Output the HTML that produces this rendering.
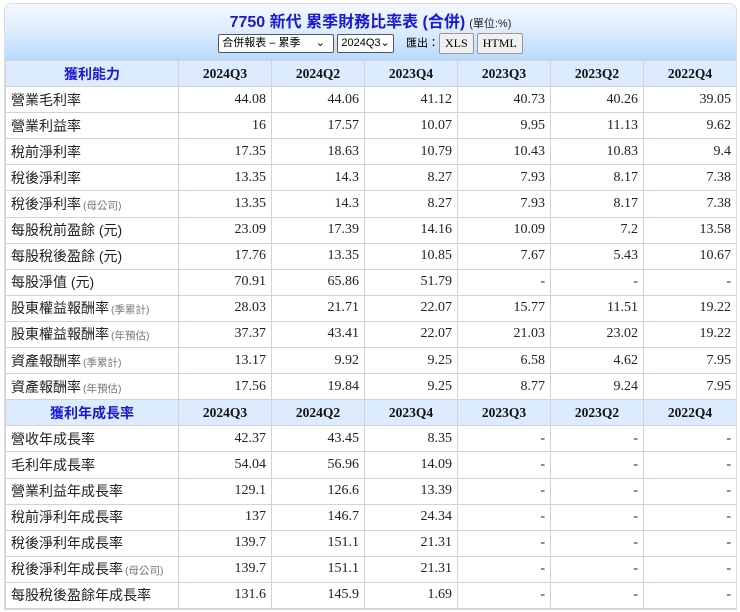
<html><head><style>
body{margin:0;background:#fff;font-family:"Liberation Sans","Noto Sans CJK TC",sans-serif;}
.wrap{position:absolute;left:4px;top:3px;width:731px;border:1px solid #d8dde3;border-radius:8px 8px 0 0;overflow:hidden;}
.top{height:56px;background:linear-gradient(#f3f8ff,#e3effd 40%,#b8d9fb);text-align:center;}
.t{padding-top:4px;font-size:16px;font-weight:bold;color:#1a1ad0;height:21px}
.t small{font-size:11px;color:#222;font-weight:normal;margin-left:4px}
.ctl{font-size:11px;color:#000;margin-top:4px}
.sel{display:inline-block;border:1px solid #555;background:#fff;height:17px;line-height:17px;padding:0 3px;font-size:11px;vertical-align:middle;border-radius:2px}
.btn{display:inline-block;border:1px solid #999;background:#f0f0f0;height:19px;line-height:19px;padding:0 5px;font-family:"Liberation Serif",serif;font-size:12px;vertical-align:middle;border-radius:2px}
table{border-collapse:collapse;width:731px;table-layout:fixed}
td{border:1px solid #d0d4d8;height:26.1px;padding:0 5px;font-size:14px;color:#222}
td.n{text-align:right;font-family:"Liberation Serif",serif;font-size:14px}
tr.h td{background:#dcebfd;font-family:"Liberation Serif",serif;font-weight:bold;text-align:center;font-size:13.5px;color:#111}
tr.h td.c{color:#1a1ad0;font-family:"Liberation Sans","Noto Sans CJK TC",sans-serif;font-size:14px}
i{font-style:normal;font-size:10.5px;color:#777;margin-left:2px}
</style></head><body><div class="wrap">
<div class="top"><div class="t">7750 新代 累季財務比率表 (合併)<small>(單位:%)</small></div>
<div class="ctl"><span class="sel" style="width:108px;text-align:left">合併報表 – 累季 &nbsp; &nbsp; ⌄</span> <span class="sel">2024Q3⌄</span> &nbsp; &nbsp;匯出：<span class="btn">XLS</span> <span class="btn">HTML</span></div></div>
<table><colgroup><col style="width:173px"><col span="6" style="width:93px"></colgroup>
<tr class="h"><td class="c">獲利能力</td><td>2024Q3</td><td>2024Q2</td><td>2023Q4</td><td>2023Q3</td><td>2023Q2</td><td>2022Q4</td></tr>
<tr><td>營業毛利率</td><td class="n">44.08</td><td class="n">44.06</td><td class="n">41.12</td><td class="n">40.73</td><td class="n">40.26</td><td class="n">39.05</td></tr>
<tr><td>營業利益率</td><td class="n">16</td><td class="n">17.57</td><td class="n">10.07</td><td class="n">9.95</td><td class="n">11.13</td><td class="n">9.62</td></tr>
<tr><td>稅前淨利率</td><td class="n">17.35</td><td class="n">18.63</td><td class="n">10.79</td><td class="n">10.43</td><td class="n">10.83</td><td class="n">9.4</td></tr>
<tr><td>稅後淨利率</td><td class="n">13.35</td><td class="n">14.3</td><td class="n">8.27</td><td class="n">7.93</td><td class="n">8.17</td><td class="n">7.38</td></tr>
<tr><td>稅後淨利率<i>(母公司)</i></td><td class="n">13.35</td><td class="n">14.3</td><td class="n">8.27</td><td class="n">7.93</td><td class="n">8.17</td><td class="n">7.38</td></tr>
<tr><td>每股稅前盈餘 (元)</td><td class="n">23.09</td><td class="n">17.39</td><td class="n">14.16</td><td class="n">10.09</td><td class="n">7.2</td><td class="n">13.58</td></tr>
<tr><td>每股稅後盈餘 (元)</td><td class="n">17.76</td><td class="n">13.35</td><td class="n">10.85</td><td class="n">7.67</td><td class="n">5.43</td><td class="n">10.67</td></tr>
<tr><td>每股淨值 (元)</td><td class="n">70.91</td><td class="n">65.86</td><td class="n">51.79</td><td class="n">-</td><td class="n">-</td><td class="n">-</td></tr>
<tr><td>股東權益報酬率<i>(季累計)</i></td><td class="n">28.03</td><td class="n">21.71</td><td class="n">22.07</td><td class="n">15.77</td><td class="n">11.51</td><td class="n">19.22</td></tr>
<tr><td>股東權益報酬率<i>(年預估)</i></td><td class="n">37.37</td><td class="n">43.41</td><td class="n">22.07</td><td class="n">21.03</td><td class="n">23.02</td><td class="n">19.22</td></tr>
<tr><td>資產報酬率<i>(季累計)</i></td><td class="n">13.17</td><td class="n">9.92</td><td class="n">9.25</td><td class="n">6.58</td><td class="n">4.62</td><td class="n">7.95</td></tr>
<tr><td>資產報酬率<i>(年預估)</i></td><td class="n">17.56</td><td class="n">19.84</td><td class="n">9.25</td><td class="n">8.77</td><td class="n">9.24</td><td class="n">7.95</td></tr>
<tr class="h"><td class="c">獲利年成長率</td><td>2024Q3</td><td>2024Q2</td><td>2023Q4</td><td>2023Q3</td><td>2023Q2</td><td>2022Q4</td></tr>
<tr><td>營收年成長率</td><td class="n">42.37</td><td class="n">43.45</td><td class="n">8.35</td><td class="n">-</td><td class="n">-</td><td class="n">-</td></tr>
<tr><td>毛利年成長率</td><td class="n">54.04</td><td class="n">56.96</td><td class="n">14.09</td><td class="n">-</td><td class="n">-</td><td class="n">-</td></tr>
<tr><td>營業利益年成長率</td><td class="n">129.1</td><td class="n">126.6</td><td class="n">13.39</td><td class="n">-</td><td class="n">-</td><td class="n">-</td></tr>
<tr><td>稅前淨利年成長率</td><td class="n">137</td><td class="n">146.7</td><td class="n">24.34</td><td class="n">-</td><td class="n">-</td><td class="n">-</td></tr>
<tr><td>稅後淨利年成長率</td><td class="n">139.7</td><td class="n">151.1</td><td class="n">21.31</td><td class="n">-</td><td class="n">-</td><td class="n">-</td></tr>
<tr><td>稅後淨利年成長率<i>(母公司)</i></td><td class="n">139.7</td><td class="n">151.1</td><td class="n">21.31</td><td class="n">-</td><td class="n">-</td><td class="n">-</td></tr>
<tr><td>每股稅後盈餘年成長率</td><td class="n">131.6</td><td class="n">145.9</td><td class="n">1.69</td><td class="n">-</td><td class="n">-</td><td class="n">-</td></tr>
</table></div></body></html>
